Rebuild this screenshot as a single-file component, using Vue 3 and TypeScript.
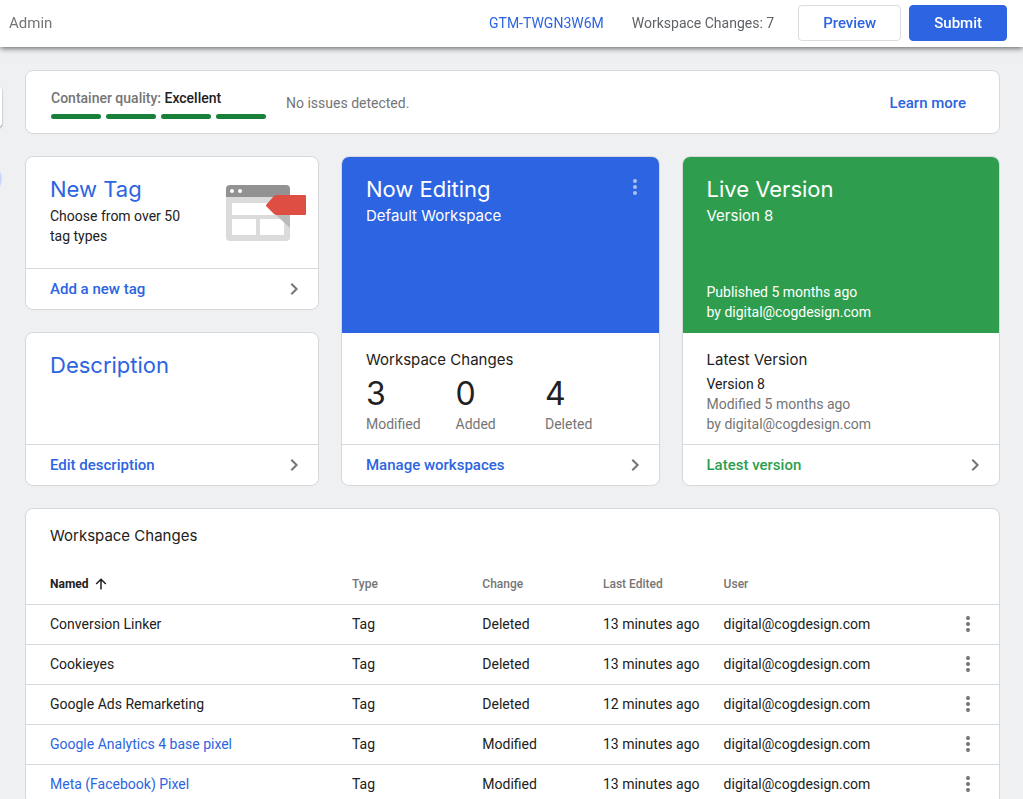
<script setup lang="ts">
interface Stat {
  value: number
  label: string
}

interface Change {
  name: string
  type: string
  change: string
  edited: string
  user: string
  linked: boolean
}

const stats: Stat[] = [
  { value: 3, label: 'Modified' },
  { value: 0, label: 'Added' },
  { value: 4, label: 'Deleted' },
]

const user = 'digital@cogdesign.com'

const changes: Change[] = [
  { name: 'Conversion Linker', type: 'Tag', change: 'Deleted', edited: '13 minutes ago', user, linked: false },
  { name: 'Cookieyes', type: 'Tag', change: 'Deleted', edited: '13 minutes ago', user, linked: false },
  { name: 'Google Ads Remarketing', type: 'Tag', change: 'Deleted', edited: '12 minutes ago', user, linked: false },
  { name: 'Google Analytics 4 base pixel', type: 'Tag', change: 'Modified', edited: '13 minutes ago', user, linked: true },
  { name: 'Meta (Facebook) Pixel', type: 'Tag', change: 'Modified', edited: '13 minutes ago', user, linked: true },
]
</script>

<template>
  <div class="app">
    <header class="topbar">
      <a class="tab" href="#">Admin</a>
      <a class="container-id" href="#">GTM-TWGN3W6M</a>
      <span class="change-count">Workspace Changes: 7</span>
      <div class="actions">
        <button type="button" class="btn preview">Preview</button>
        <button type="button" class="btn submit">Submit</button>
      </div>
    </header>

    <main class="content">
      <div class="nav-search"></div>
      <div class="nav-active"></div>

      <section class="card quality">
        <div class="score">
          <p class="score-text">Container quality: <strong>Excellent</strong></p>
          <div class="bars"><i v-for="n in 4" :key="n"></i></div>
        </div>
        <p class="issues">No issues detected.</p>
        <a class="learn" href="#">Learn more</a>
      </section>

      <div class="grid">
        <section class="card new-tag">
          <div class="intro">
            <div>
              <h2 class="title">New Tag</h2>
              <p class="text">Choose from over 50<br />tag types</p>
            </div>
            <svg class="art" width="80" height="56" viewBox="0 0 80 56" aria-hidden="true">
              <path fill="#dbdbdb" d="M0 12h64v40a4 4 0 0 1-4 4H4a4 4 0 0 1-4-4z" />
              <path fill="#929292" d="M4 0h56a4 4 0 0 1 4 4v8H0V4a4 4 0 0 1 4-4z" />
              <circle cx="6" cy="6" r="2" fill="#fff" />
              <circle cx="14" cy="6" r="2" fill="#fff" />
              <path fill="#fff" d="M6 18h52v12H6zM6 34h24v16H6zM34 34h24v16H34z" />
              <path fill="#bababa" d="M49 29h15v14z" />
              <path fill="#df4e42" d="M40 20l7.500-8.500Q49 10 51 10h28a1 1 0 0 1 1 1v18a1 1 0 0 1-1 1H51q-2 0-3.500-1.500L40 21z" />
            </svg>
          </div>
          <a class="foot" href="#">
            Add a new tag
            <svg width="24" height="24" viewBox="0 0 24 24" aria-hidden="true"><path d="M9.300 6.700l5.300 5.300-5.300 5.300" /></svg>
          </a>
        </section>

        <section class="card description">
          <div class="intro"><h2 class="title">Description</h2></div>
          <a class="foot" href="#">
            Edit description
            <svg width="24" height="24" viewBox="0 0 24 24" aria-hidden="true"><path d="M9.300 6.700l5.300 5.300-5.300 5.300" /></svg>
          </a>
        </section>

        <section class="card editing">
          <div class="banner blue">
            <div class="banner-top">
              <h2 class="title">Now Editing</h2>
              <button type="button" class="menu light" aria-label="Workspace menu">
                <svg width="24" height="24" viewBox="0 0 24 24"><circle cx="12" cy="6" r="2" /><circle cx="12" cy="12" r="2" /><circle cx="12" cy="18" r="2" /></svg>
              </button>
            </div>
            <p class="subtitle">Default Workspace</p>
          </div>
          <div class="body">
            <h3 class="heading">Workspace Changes</h3>
            <dl class="stats">
              <div v-for="s in stats" :key="s.label">
                <dd>{{ s.value }}</dd>
                <dt>{{ s.label }}</dt>
              </div>
            </dl>
          </div>
          <a class="foot" href="#">
            Manage workspaces
            <svg width="24" height="24" viewBox="0 0 24 24" aria-hidden="true"><path d="M9.300 6.700l5.300 5.300-5.300 5.300" /></svg>
          </a>
        </section>

        <section class="card live">
          <div class="banner green">
            <h2 class="title">Live Version</h2>
            <p class="subtitle">Version 8</p>
            <p class="text published">Published 5 months ago<br />by {{ user }}</p>
          </div>
          <div class="body">
            <h3 class="heading">Latest Version</h3>
            <p class="text version">Version 8</p>
            <p class="text muted">Modified 5 months ago<br />by {{ user }}</p>
          </div>
          <a class="foot green-link" href="#">
            Latest version
            <svg width="24" height="24" viewBox="0 0 24 24" aria-hidden="true"><path d="M9.300 6.700l5.300 5.300-5.300 5.300" /></svg>
          </a>
        </section>
      </div>

      <section class="card changes">
        <h3 class="heading">Workspace Changes</h3>
        <table>
          <thead>
            <tr>
              <th class="c-name" scope="col" aria-sort="ascending">
                <button type="button" class="sort">
                  Named
                  <svg width="12" height="12" viewBox="0 0 12 12" aria-hidden="true"><path d="M6 11.500V1.500M1.200 6L6 1.200 10.800 6" /></svg>
                </button>
              </th>
              <th class="c-type" scope="col">Type</th>
              <th class="c-change" scope="col">Change</th>
              <th class="c-edited" scope="col">Last Edited</th>
              <th scope="col">User</th>
              <td class="c-menu"></td>
            </tr>
          </thead>
          <tbody>
            <tr v-for="c in changes" :key="c.name">
              <td class="c-name">
                <a v-if="c.linked" href="#">{{ c.name }}</a>
                <template v-else>{{ c.name }}</template>
              </td>
              <td>{{ c.type }}</td>
              <td>{{ c.change }}</td>
              <td>{{ c.edited }}</td>
              <td>{{ c.user }}</td>
              <td class="c-menu">
                <button type="button" class="menu" :aria-label="`Actions for ${c.name}`">
                  <svg width="24" height="24" viewBox="0 0 24 24"><circle cx="12" cy="6" r="2" /><circle cx="12" cy="12" r="2" /><circle cx="12" cy="18" r="2" /></svg>
                </button>
              </td>
            </tr>
          </tbody>
        </table>
      </section>
    </main>
  </div>
</template>

<style>
body {
  margin: 0;
  background: #eff0f2;
}
</style>

<style scoped>
.app {
  display: flex;
  flex-direction: column;
  height: 100vh;
  color: #212121;
  font-family: Roboto, "Liberation Sans", sans-serif;
  font-size: 14px;
  line-height: 20px;
}

.app * {
  box-sizing: border-box;
}

p,
h2,
h3,
dl,
dd {
  margin: 0;
}

a {
  color: #2c64e1;
  text-decoration: none;
}

button {
  font-family: inherit;
  cursor: pointer;
}

.topbar {
  position: relative;
  z-index: 1;
  flex: none;
  display: flex;
  align-items: center;
  height: 47px;
  padding: 0 16px 1px 9px;
  background: #fff;
  box-shadow: 0 1px 6px rgba(0, 0, 0, 0.65);
}

.tab {
  margin-right: auto;
  color: #757575;
  font-size: 15px;
}

.change-count {
  margin: 0 24px 0 28px;
  color: #5f6368;
}

.actions {
  display: flex;
  gap: 8px;
}

.btn {
  height: 36px;
  padding: 0 24px;
  border: 1px solid #dadce0;
  border-radius: 4px;
  background: #fff;
  color: #2c64e1;
  font-size: 15px;
  font-weight: 500;
}

.submit {
  border-color: #2c64e1;
  background: #2c64e1;
  color: #fff;
}

.content {
  position: relative;
  flex: 1;
  min-height: 0;
  overflow-y: auto;
  scrollbar-width: none;
  padding: 23px 23px 0 25px;
  background: #eff0f2;
}

/* Right edges of the collapsed side navigation. */
.nav-search {
  position: absolute;
  top: 40px;
  left: -38px;
  width: 40px;
  height: 40px;
  border-radius: 4px;
  background: #fff;
  box-shadow: 0 1px 2px rgba(0, 0, 0, 0.4);
}

.nav-active {
  position: absolute;
  top: 116px;
  left: -30px;
  width: 32px;
  height: 32px;
  border-radius: 16px;
  background: #c9dafc;
}

.card {
  display: flex;
  flex-direction: column;
  overflow: hidden;
  border: 1px solid #d6d8dc;
  border-radius: 8px;
  background: #fff;
}

.quality {
  flex-direction: row;
  align-items: center;
  height: 64px;
  padding: 2px 33px 0 25px;
}

.score {
  width: 215px;
  margin-right: 20px;
}

.score-text {
  color: #757575;
  font-weight: 500;
}

.score-text strong {
  color: #212121;
  font-weight: 500;
}

.bars {
  display: flex;
  gap: 5px;
  margin-top: 6px;
}

.bars i {
  flex: 1;
  height: 5px;
  border-radius: 3px;
  background: #188038;
}

.issues {
  color: #757575;
}

.learn {
  margin-left: auto;
  font-size: 15px;
  font-weight: 500;
}

.grid {
  display: grid;
  grid-template-columns: 12fr 13fr 13fr;
  grid-template-rows: 154px 154px;
  gap: 22px;
  margin: 22px 0;
}

.new-tag {
  grid-area: 1 / 1;
}

.description {
  grid-area: 2 / 1;
}

.editing {
  grid-area: 1 / 2 / 3 / 3;
}

.live {
  grid-area: 1 / 3 / 3 / 4;
}

.intro {
  flex: 1;
  display: flex;
  justify-content: space-between;
  padding: 16px 12px 0 24px;
}

.title {
  color: #2c64e1;
  font-family: Inter, Roboto, sans-serif;
  font-size: 22px;
  font-weight: 400;
  line-height: 32px;
}

.intro .text {
  margin-top: 1px;
}

.art {
  margin-top: 12px;
}

.banner {
  display: flex;
  flex-direction: column;
  height: 176px;
  padding: 16px 12px 11px 24px;
  color: #fff;
}

.banner .title {
  color: #fff;
}

.banner-top {
  display: flex;
  justify-content: space-between;
}

.blue {
  background: #2c64e1;
}

.green {
  background: #2e9e4e;
}

.subtitle {
  font-family: Inter, Roboto, sans-serif;
  font-size: 15px;
  line-height: 22px;
}

.published {
  margin-top: auto;
}

.body {
  flex: 1;
  padding: 15px 24px 0;
}

.heading {
  margin-bottom: 2px;
  font-family: Inter, Roboto, sans-serif;
  font-size: 15px;
  font-weight: 400;
  line-height: 24px;
}

.stats {
  display: flex;
}

.stats div {
  display: flex;
  flex-direction: column;
  width: 90px;
}

.stats dd {
  font-family: Inter, Roboto, sans-serif;
  font-size: 32px;
  line-height: 40px;
}

.stats dt,
.muted {
  color: #757575;
}

.foot {
  display: flex;
  align-items: center;
  justify-content: space-between;
  height: 41px;
  padding: 0 12px 0 24px;
  border-top: 1px solid #d6d8dc;
  font-size: 15px;
  font-weight: 500;
}

.foot svg {
  fill: none;
  stroke: #757575;
  stroke-width: 2;
}

.green-link {
  color: #2e9e4e;
}

.menu {
  display: inline-flex;
  width: 24px;
  height: 24px;
  padding: 0;
  border: 0;
  background: none;
  fill: #757575;
}

.light {
  margin-top: 2px;
  fill: #a9c1f5;
}

.changes .heading {
  margin: 0;
  padding: 15px 24px 16px;
}

table {
  width: 100%;
  border-collapse: collapse;
  table-layout: fixed;
}

th,
td {
  height: 40px;
  padding: 0;
  text-align: left;
  white-space: nowrap;
}

th {
  color: #757575;
  font-size: 12px;
  font-weight: 500;
}

tbody tr {
  border-top: 1px solid #d6d8dc;
}

.c-name {
  width: 33.5%;
  padding-left: 24px;
}

.c-type {
  width: 13.4%;
}

.c-change,
.c-edited {
  width: 12.4%;
}

.c-menu {
  width: 60px;
  padding-right: 19px;
  text-align: right;
}

.c-menu .menu {
  vertical-align: middle;
}

.sort {
  display: flex;
  align-items: center;
  gap: 6px;
  padding: 0;
  border: 0;
  background: none;
  color: #212121;
  font-size: 12px;
  font-weight: 700;
}

.sort svg {
  fill: none;
  stroke: #212121;
  stroke-width: 1.5;
}
</style>
